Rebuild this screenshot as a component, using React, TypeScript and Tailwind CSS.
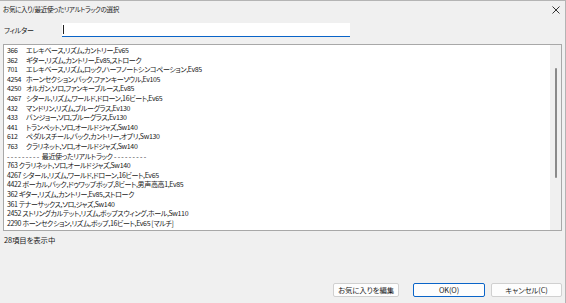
const favorites: [string, string][] = [
  ["366", "エレキベース,リズム,カントリー,Ev65"],
  ["362", "ギター,リズム,カントリー,Ev85,ストローク"],
  ["701", "エレキベース,リズム,ロック,ハーフノートシンコペーション,Ev85"],
  ["4254", "ホーンセクション,バック,ファンキーソウル,Ev105"],
  ["4250", "オルガン,ソロ,ファンキーブルース,Ev85"],
  ["4267", "シタール,リズム,ワールド,ドローン,16ビート,Ev65"],
  ["432", "マンドリン,リズム,ブルーグラス,Ev130"],
  ["433", "バンジョー,ソロ,ブルーグラス,Ev130"],
  ["441", "トランペット,ソロ,オールドジャズ,Sw140"],
  ["612", "ペダルスチール,バック,カントリー,オプリ,Sw130"],
  ["763", "クラリネット,ソロ,オールドジャズ,Sw140"],
];

const recent: string[] = [
  "763 クラリネット,ソロ,オールドジャズ,Sw140",
  "4267 シタール,リズム,ワールド,ドローン,16ビート,Ev65",
  "4422 ボーカル,バック,ドゥワップポップ,8ビート,男声高高1,Ev85",
  "362 ギター,リズム,カントリー,Ev85,ストローク",
  "361 テナーサックス,ソロ,ジャズ,Sw140",
  "2452 ストリングカルテット,リズム,ポップスウィング,ホール,Sw110",
  "2290 ホーンセクション,リズム,ポップ,16ビート,Ev65 [マルチ]",
];

const font =
  "font-['Meiryo_UI','Noto_Sans_CJK_JP',sans-serif] [font-feature-settings:'palt']";

export default function App() {
  return (
    <div
      className={`w-[566px] h-[303px] bg-[#f0f0f0] border-t border-r border-[#b4b4b4] flex flex-col text-[#1a1a1a] ${font}`}
    >
      <div className="h-[17px] flex items-center justify-between pl-[3px] pr-[4px] text-[6.6px] tracking-[-0.4px]">
        <span>お気に入り/最近使ったリアルトラックの選択</span>
        <svg width="8" height="8" viewBox="0 0 8 8" className="mr-[1px]">
          <path d="M0.5 0.5L7.5 7.5M7.5 0.5L0.5 7.5" stroke="#333" strokeWidth="1" />
        </svg>
      </div>

      <div className="flex items-center mt-[5px] h-[14px] pl-[4px] text-[7px] tracking-[-0.2px]">
        <span className="w-[58px]">フィルター</span>
        <div className="w-[288px] h-[14px] bg-white border-b-[1.5px] border-[#0a64c8] flex items-center pl-[1px]">
          <div className="w-px h-[9px] bg-[#222]" />
        </div>
      </div>

      <div className="mx-[3px] mt-[7px] h-[187px] border border-[#a8a8a8] bg-white flex">
        <div className="flex-1 pl-[3px] pt-[1px] text-[7px] tracking-[-0.36px] leading-[9.6px] whitespace-pre overflow-hidden">
          {favorites.map(([n, t]) => (
            <div key={n} className="flex">
              <span className="w-[19px] shrink-0">{n}</span>
              <span>{t}</span>
            </div>
          ))}
          <div>
            <span className="tracking-[1.3px]">---------</span> 最近使ったリアルトラック{" "}
            <span className="tracking-[1.3px]">---------</span>
          </div>
          {recent.map((r) => (
            <div key={r}>{r}</div>
          ))}
        </div>
        <div className="w-[11px] bg-[#f0f0f0] flex justify-center pt-[23px]">
          <div className="w-[2px] h-[110px] bg-[#8a8a8a] rounded-full" />
        </div>
      </div>

      <div className="pl-[4px] mt-[3px] leading-[12px] text-[7.4px] tracking-[-0.1px]">28項目を表示中</div>

      <div className="flex justify-end items-center mt-auto mb-[6px] pr-[3px] gap-[6px] text-[7.4px] tracking-[-0.1px]">
        <button className="w-[66px] h-[14px] bg-[#fdfdfd] border border-[#d0d0d0] rounded-[2px] mr-[8px] leading-none whitespace-nowrap">
          お気に入りを編集
        </button>
        <button className="w-[72px] h-[14px] bg-[#fdfdfd] border border-[#0a64c8] rounded-[2px] leading-none">
          OK(O)
        </button>
        <button className="w-[71px] h-[14px] bg-[#fdfdfd] border border-[#d0d0d0] rounded-[2px] leading-none">
          キャンセル(C)
        </button>
      </div>
    </div>
  );
}
